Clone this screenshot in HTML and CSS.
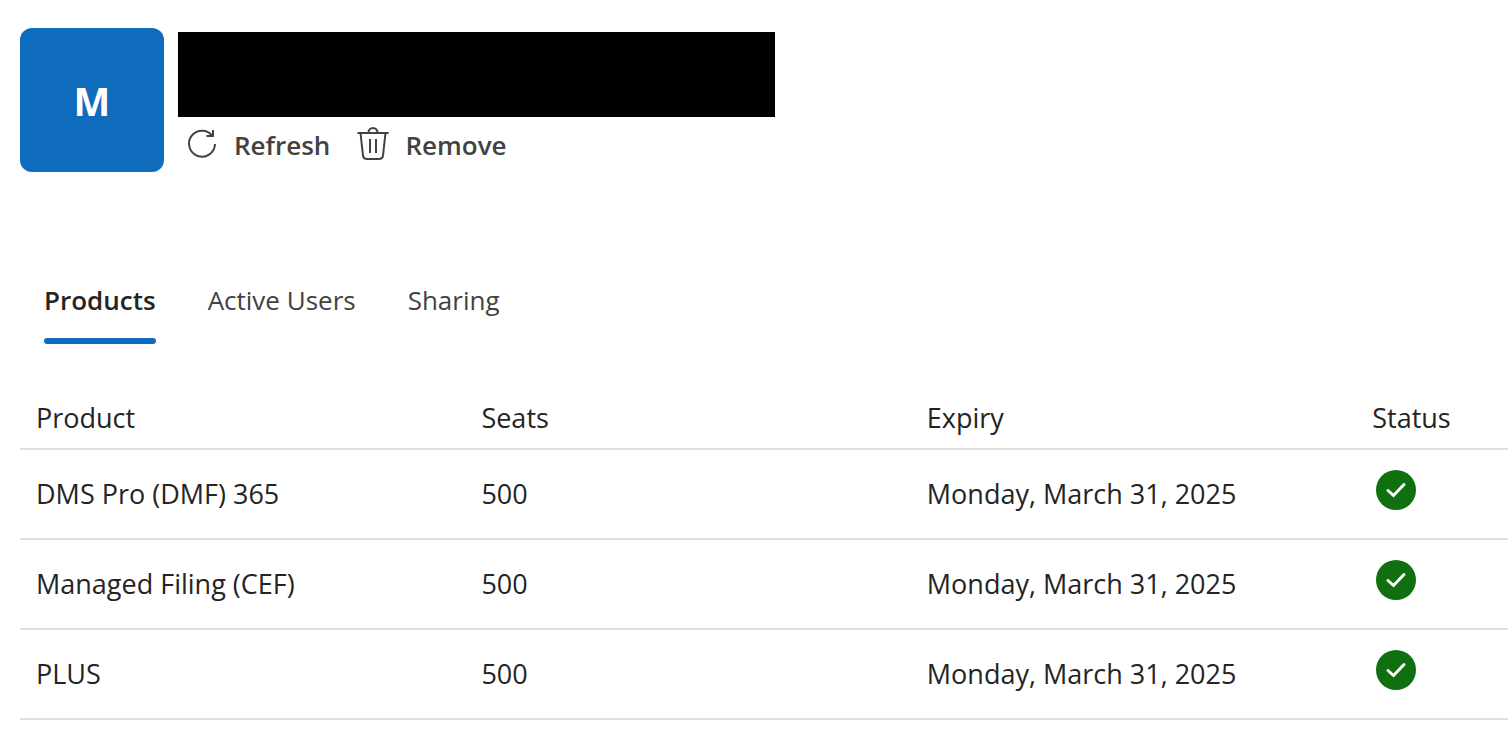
FILE: index.html
```html
<!DOCTYPE html>
<html lang="en">
<head>
    <meta charset="UTF-8">
    <meta name="viewport" content="width=device-width, initial-scale=1.0">
    <title>Products</title>
    <link rel="stylesheet" href="styles.css">
</head>
<body>

    <header class="header">
        <div class="avatar">M</div>
        <div class="details">
            <div class="name"></div>
            <div class="actions">
                <button type="button">
                    <svg width="32" height="36" viewBox="0 0 32 36" aria-hidden="true">
                        <path d="M29 17A13 13 0 1 1 26.500 9"/>
                        <path d="M27 3V9H20.500"/>
                    </svg>
                    Refresh
                </button>
                <button type="button">
                    <svg width="32" height="36" viewBox="0 0 32 36" aria-hidden="true">
                        <path d="M0.5 6H31.5M11.5 5.500A4.5 4.5 0 0 1 20.5 5.500"/>
                        <path d="M3.5 6L6 28.500Q6.500 32 10 32H22Q25.500 32 26 28.500L28.500 6"/>
                        <path d="M13 12V26M19 12V26"/>
                    </svg>
                    Remove
                </button>
            </div>
        </div>
    </header>

    <div class="tabs" role="tablist">
        <button type="button" class="active" role="tab" aria-selected="true">Products</button>
        <button type="button" role="tab" aria-selected="false">Active Users</button>
        <button type="button" role="tab" aria-selected="false">Sharing</button>
    </div>

    <table class="products">
        <thead>
            <tr>
                <th>Product</th>
                <th>Seats</th>
                <th>Expiry</th>
                <th class="status">Status</th>
            </tr>
        </thead>
        <tbody>
            <tr>
                <td>DMS Pro (DMF) 365</td>
                <td>500</td>
                <td>Monday, March 31, 2025</td>
                <td class="status">
                    <svg class="check" viewBox="0 0 40 40" role="img" aria-label="Active"><path d="M12 20.500L17.500 25.500L28 14.500"/></svg>
                </td>
            </tr>
            <tr>
                <td>Managed Filing (CEF)</td>
                <td>500</td>
                <td>Monday, March 31, 2025</td>
                <td class="status">
                    <svg class="check" viewBox="0 0 40 40" role="img" aria-label="Active"><path d="M12 20.500L17.500 25.500L28 14.500"/></svg>
                </td>
            </tr>
            <tr>
                <td>PLUS</td>
                <td>500</td>
                <td>Monday, March 31, 2025</td>
                <td class="status">
                    <svg class="check" viewBox="0 0 40 40" role="img" aria-label="Active"><path d="M12 20.500L17.500 25.500L28 14.500"/></svg>
                </td>
            </tr>
        </tbody>
    </table>

</body>
</html>
```
FILE: styles.css
```css
body {
    font-family: 'Segoe UI', 'Open Sans', sans-serif;
    font-size: 27px;
    line-height: 40px;
    background-color: #fff;
    color: #242424;
    margin: 0;
    padding: 28px 0 0 20px;
}
button {
    font: inherit;
    font-size: 26px;
    color: #424242;
    background: none;
    border: none;
    padding: 0;
    cursor: pointer;
}
.header {
    display: flex;
    gap: 14px;
}
.avatar {
    display: flex;
    justify-content: center;
    align-items: center;
    box-sizing: border-box;
    width: 144px;
    height: 144px;
    padding-top: 2px;
    border-radius: 12px;
    background-color: #0f6cbd;
    color: #fff;
    font-size: 39px;
    font-weight: 700;
}
.details {
    padding-top: 4px;
}
.name {
    width: 597px;
    max-width: 100%;
    height: 85px;
    background-color: #000;
}
.actions {
    display: flex;
    gap: 27px;
    padding: 8px;
}
.actions button {
    display: flex;
    align-items: center;
    gap: 16px;
    font-weight: 600;
}
.actions svg {
    fill: none;
    stroke: #424242;
    stroke-width: 2;
}
.tabs {
    display: flex;
    gap: 52px;
    margin-top: 107px;
    padding: 0 24px;
}
.tabs button {
    padding-bottom: 24px;
}
.tabs .active {
    position: relative;
    color: #242424;
    font-weight: 600;
}
.tabs .active::after {
    content: "";
    position: absolute;
    left: 0;
    right: 0;
    bottom: 0;
    height: 6px;
    border-radius: 3px;
    background-color: #0f6cbd;
}
.products {
    width: 100%;
    margin-top: 44px;
    table-layout: fixed;
    border-collapse: separate;
    border-spacing: 0;
}
.products th, .products td {
    padding: 0 16px;
    border-bottom: 2px solid #e0e0e0;
    text-align: left;
    font-weight: 400;
    white-space: nowrap;
}
.products th {
    height: 60px;
}
.products td {
    height: 88px;
}
.products .status {
    width: 10.2%;
    padding-right: 0;
    box-sizing: border-box;
}
.check {
    display: block;
    width: 40px;
    height: 40px;
    margin: 0 0 8px 4px;
    border-radius: 50%;
    background-color: #107010;
    fill: none;
    stroke: #fff;
    stroke-width: 3;
    stroke-linecap: round;
}
```
